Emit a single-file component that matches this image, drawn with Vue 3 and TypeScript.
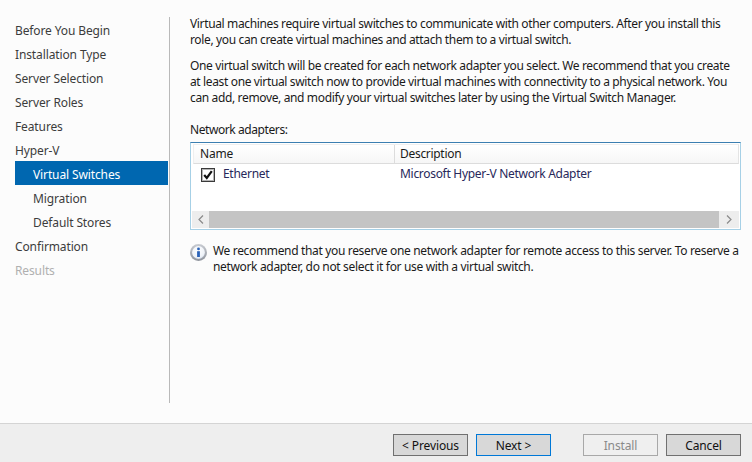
<script setup lang="ts">
const steps = [
  { label: 'Before You Begin' },
  { label: 'Installation Type' },
  { label: 'Server Selection' },
  { label: 'Server Roles' },
  { label: 'Features' },
  { label: 'Hyper-V' },
  { label: 'Virtual Switches', sub: true, active: true },
  { label: 'Migration', sub: true },
  { label: 'Default Stores', sub: true },
  { label: 'Confirmation' },
  { label: 'Results', disabled: true },
]
</script>

<template>
  <div class="wizard">
    <div class="main">
      <nav class="nav">
        <div
          v-for="s in steps"
          :key="s.label"
          class="step"
          :class="{ sub: s.sub, active: s.active, disabled: s.disabled }"
        >{{ s.label }}</div>
      </nav>
      <section class="content">
        <p class="para">Virtual machines require virtual switches to communicate with other computers. After you install this<br>role, you can create virtual machines and attach them to a virtual switch.</p>
        <p class="para second">One virtual switch will be created for each network adapter you select. We recommend that you create<br>at least one virtual switch now to provide virtual machines with connectivity to a physical network. You<br>can add, remove, and modify your virtual switches later by using the Virtual Switch Manager.</p>
        <div class="list-label">Network adapters:</div>
        <div class="list">
          <div class="head">
            <div class="col-name">Name</div>
            <div class="col-desc">Description</div>
          </div>
          <div class="row">
            <div class="cell-name">
              <span class="check">
                <svg width="10" height="10" viewBox="0 0 10 10"><path d="M1.2 5 L3.8 8 L8.8 1.2" fill="none" stroke="#111" stroke-width="2.2"/></svg>
              </span>
              <span class="item">Ethernet</span>
            </div>
            <div class="cell-desc item">Microsoft Hyper-V Network Adapter</div>
          </div>
          <div class="spacer"></div>
          <div class="scrollbar">
            <div class="arrow">
              <svg width="6" height="9" viewBox="0 0 6 9"><path d="M5 .5 L1 4.5 L5 8.5" fill="none" stroke="#8a8a8a" stroke-width="1.2"/></svg>
            </div>
            <div class="thumb"></div>
            <div class="arrow right">
              <svg width="6" height="9" viewBox="0 0 6 9"><path d="M1 .5 L5 4.5 L1 8.5" fill="none" stroke="#8a8a8a" stroke-width="1.2"/></svg>
            </div>
          </div>
        </div>
        <div class="note">
          <svg class="info" width="17" height="17" viewBox="0 0 17 17">
            <defs>
              <linearGradient id="ring" x1="0" y1="0" x2="0" y2="1">
                <stop offset="0" stop-color="#c9ccd2"/>
                <stop offset="1" stop-color="#8e939c"/>
              </linearGradient>
              <radialGradient id="ig" cx="0.45" cy="0.35" r="0.75">
                <stop offset="0" stop-color="#ffffff"/>
                <stop offset="0.7" stop-color="#eef2f8"/>
                <stop offset="1" stop-color="#bcc8dc"/>
              </radialGradient>
            </defs>
            <circle cx="8.5" cy="8.5" r="8.5" fill="url(#ring)"/>
            <circle cx="8.5" cy="8.5" r="6.4" fill="url(#ig)"/>
            <circle cx="8.5" cy="4.9" r="1.4" fill="#2a62b8"/>
            <rect x="7.1" y="7.2" width="2.8" height="5.8" fill="#2a62b8"/>
          </svg>
          <p class="note-text">We recommend that you reserve one network adapter for remote access to this server. To reserve a<br>network adapter, do not select it for use with a virtual switch.</p>
        </div>
      </section>
    </div>
    <footer class="footer">
      <button class="btn">&lt; Previous</button>
      <button class="btn primary">Next &gt;</button>
      <button class="btn off" disabled>Install</button>
      <button class="btn">Cancel</button>
    </footer>
  </div>
</template>

<style>
html, body { margin: 0; background: #fcfcfc; }
</style>

<style scoped>
.wizard {
  width: 752px;
  height: 462px;
  display: flex;
  flex-direction: column;
  background: #fcfcfc;
  font-family: "Noto Sans", "Open Sans", sans-serif;
  font-size: 12px;
  color: #1a1a1a;
  overflow: hidden;
}
.main {
  flex: 1;
  display: flex;
  min-height: 0;
}
.nav {
  width: 153px;
  margin: 17px 0 20px 15px;
  border-right: 1px solid #b9b9b9;
  padding-right: 1px;
}
.step {
  height: 24px;
  line-height: 28px;
  color: #3c3c3c;
  white-space: nowrap;
  letter-spacing: -0.12px;
}
.step.sub { padding-left: 18px; }
.step.active { background: #0067b0; color: #fff; }
.step.disabled { color: #b0b0b0; }
.content {
  flex: 1;
  padding: 16px 0 0 20px;
  min-width: 0;
}
.para {
  margin: 0;
  line-height: 16px;
  white-space: nowrap;
  letter-spacing: -0.36px;
}
.second { margin-top: 10px; }
.list-label {
  margin-top: 16px;
  line-height: 16px;
  letter-spacing: -0.42px;
}
.list {
  margin-top: 4px;
  width: 551px;
  height: 88px;
  box-sizing: border-box;
  border: 1px solid #a6d0e6;
  border-top-color: #3c7fb1;
  display: flex;
  flex-direction: column;
  background: #fff;
}
.head {
  height: 20px;
  margin: 1px 1px 0 2px;
  display: flex;
  box-sizing: border-box;
  border-bottom: 1px solid #dcdcdc;
  border-right: 1px solid #e4e4e4;
  border-left: 1px solid #efefef;
  border-top: 1px solid #efefef;
  background: linear-gradient(#fff, #f6f6f6);
  line-height: 18px;
}
.col-name {
  width: 201px;
  padding-left: 6px;
  box-sizing: border-box;
  border-right: 1px solid #dcdcdc;
  letter-spacing: -0.2px;
}
.col-desc { padding-left: 5px; letter-spacing: -0.3px; }
.row {
  display: flex;
  height: 22px;
  align-items: center;
}
.cell-name {
  width: 208px;
  padding-left: 10px;
  box-sizing: border-box;
  display: flex;
  align-items: center;
  gap: 8px;
}
.check {
  width: 14px;
  height: 14px;
  box-sizing: border-box;
  border: 1px solid #3a3a3a;
  box-shadow: inset 0 0 0 1px #b4b4b4;
  background: #fff;
  display: flex;
  align-items: center;
  justify-content: center;
}
.item {
  color: #28285a;
  letter-spacing: -0.3px;
  line-height: 16px;
  padding-bottom: 2px;
}
.cell-desc { padding-left: 1px; }
.spacer { flex: 1; }
.scrollbar {
  height: 17px;
  margin: 0 1px 1px;
  display: flex;
  background: #ededed;
}
.arrow {
  width: 17px;
  display: flex;
  align-items: center;
  justify-content: center;
}
.arrow.right { width: 20px; }
.thumb {
  flex: 1;
  background: #c4c4c4;
}
.note {
  margin-top: 13px;
  width: 556px;
  display: flex;
  gap: 6px;
  align-items: flex-start;
}
.info { flex: none; margin-top: 1px; }
.note-text {
  margin: 0;
  line-height: 16px;
  white-space: nowrap;
  letter-spacing: -0.34px;
}
.footer {
  height: 38px;
  flex: none;
  border-top: 1px solid #d4d4d4;
  background: #eeeeee;
  display: flex;
  align-items: flex-start;
  justify-content: flex-end;
  padding-right: 11px;
  gap: 8px;
}
.btn {
  margin-top: 10px;
  width: 75px;
  height: 22px;
  box-sizing: border-box;
  border: 1px solid #707070;
  background: #d8d8d8;
  font: inherit;
  color: #111;
  padding: 2px 0 0;
  line-height: 18px;
  letter-spacing: -0.12px;
}
.primary {
  border-color: #0078d7;
}
.off {
  margin-left: 24px;
  background: #efefef;
  border-color: #a8a8a8;
  color: #8a8a8a;
}
</style>
